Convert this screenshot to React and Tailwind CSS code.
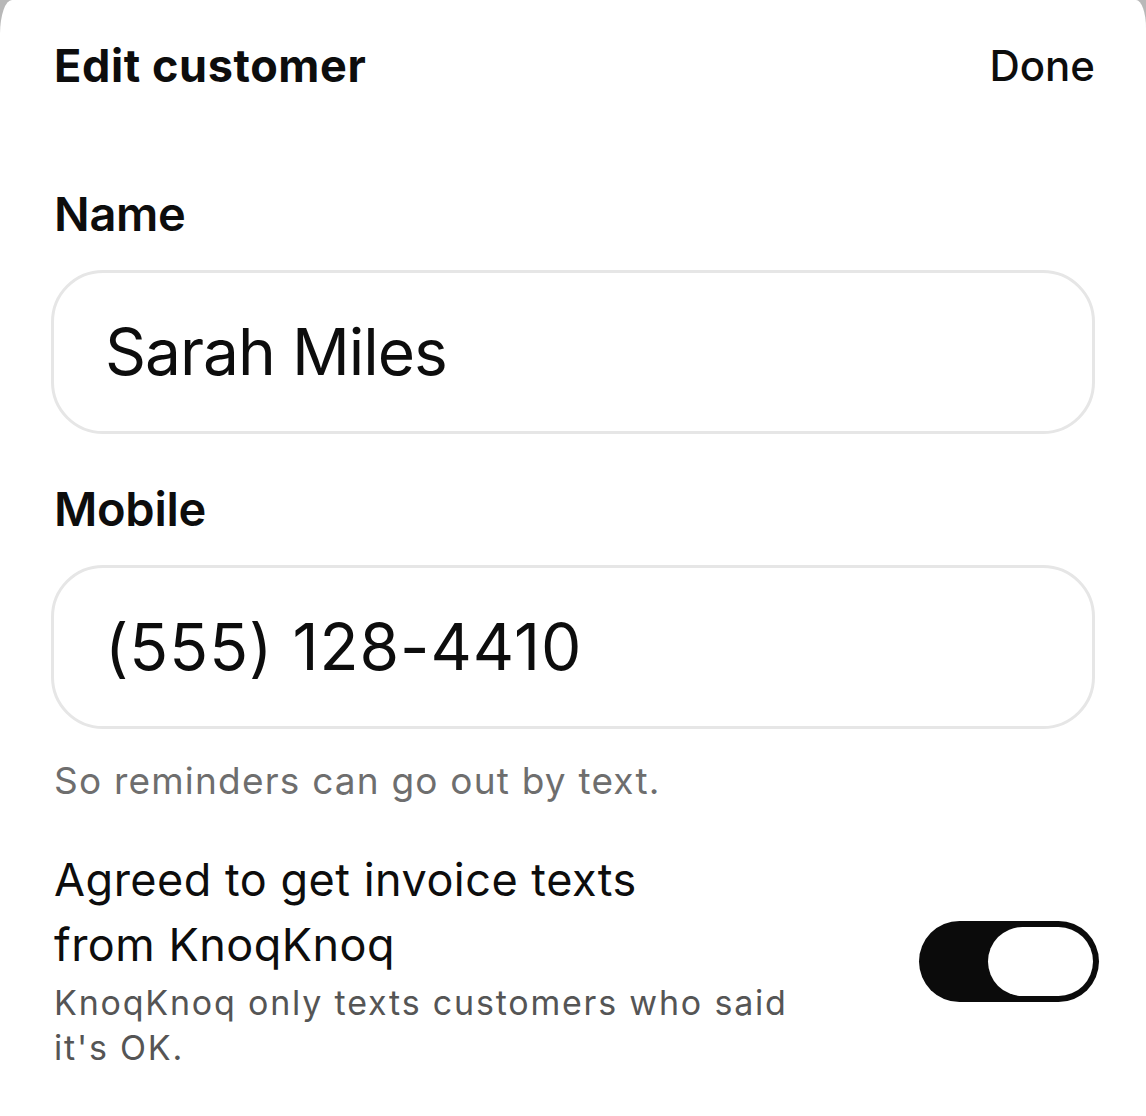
import React, { useState } from 'react';

function Field({ label, value, valueClass = '', className = '' }) {
  return (
    <div className={className}>
      <div className="pl-[3px] text-[47px] font-semibold leading-none tracking-[-0.3px] text-[#0d0d0d]">{label}</div>
      <div className="mt-[33px] h-[164px] rounded-[52px] border-[3px] border-[#e6e6e6] bg-white px-[51px] flex items-center">
        <span className={`text-[64px] leading-none text-[#0d0d0d] ${valueClass}`}>{value}</span>
      </div>
    </div>
  );
}

export default function App() {
  const [agreed, setAgreed] = useState(true);

  return (
    <div className="w-[1146px] h-[1116px] bg-[#b8b8b8] overflow-hidden" style={{ fontFamily: 'Inter, "Noto Sans", sans-serif' }}>
      <div className="h-full bg-white rounded-tl-[12px_34px] rounded-tr-[10px_28px] px-[51px] pt-[43px]">
        <header className="flex items-center justify-between pl-[3px]">
          <h1 className="text-[45px] font-bold leading-none tracking-[0.6px] text-[#0d0d0d]">Edit customer</h1>
          <button className="text-[42px] font-medium leading-none text-[#0d0d0d]">Done</button>
        </header>

        <Field label="Name" value="Sarah Miles" valueClass="tracking-[-1px]" className="mt-[102px]" />
        <Field label="Mobile" value="(555) 128-4410" valueClass="tracking-[1px]" className="mt-[51px]" />

        <p className="mt-[33px] pl-[3px] text-[37px] leading-none tracking-[1.2px] text-[#6e6e6e]">So reminders can go out by text.</p>

        <div className="mt-[48px] pl-[3px] flex items-start justify-between">
          <div className="w-[760px]">
            <div className="max-w-[650px] text-[45px] leading-[65px] tracking-[0.5px] text-[#0d0d0d]">Agreed to get invoice texts from KnoqKnoq</div>
            <div className="mt-[3px] text-[34px] leading-[45px] tracking-[1.8px] text-[#555555]">KnoqKnoq only texts customers who said it's OK.</div>
          </div>
          <button
            onClick={() => setAgreed(!agreed)}
            className="mt-[74px] mr-[-4px] w-[180px] h-[81px] rounded-full bg-[#0b0b0b] p-[6px] flex justify-end"
          >
            <span className="w-[105px] h-full rounded-full bg-white" />
          </button>
        </div>
      </div>
    </div>
  );
}
